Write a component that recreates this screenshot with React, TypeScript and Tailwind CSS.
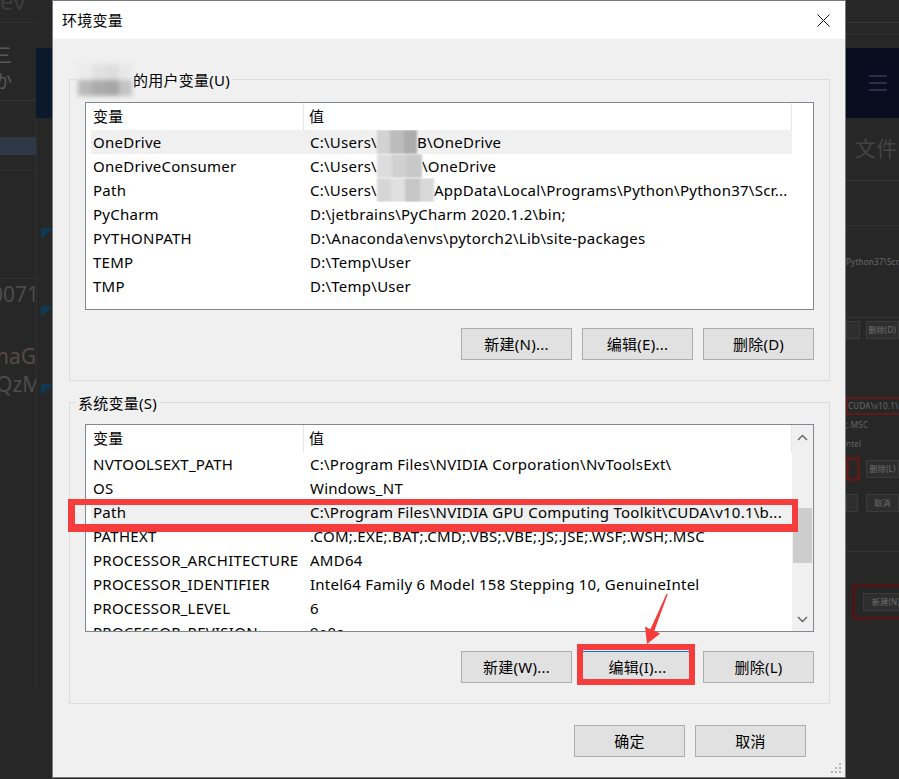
import React from 'react';

interface VarRow {
  name: string;
  value: React.ReactNode;
  selected?: boolean;
}

// pixelated privacy blur over the user name
const Mosaic: React.FC<{ width: string; blocks: string[] }> = ({ width, blocks }) => (
  <span className={`inline-flex h-[24px] shrink-0 blur-[1.2px] ${width}`}>
    {blocks.map((b, i) => (
      <span key={i} className={`flex-1 ${b}`} />
    ))}
  </span>
);

const userVars: VarRow[] = [
  {
    name: 'OneDrive',
    selected: true,
    value: (
      <>
        <span>C:\Users\</span>
        <Mosaic width="w-[40px]" blocks={['bg-[#d2d2d2]', 'bg-[#bcbcbc]', 'bg-[#acacac]']} />
        <span>B\OneDrive</span>
      </>
    ),
  },
  {
    name: 'OneDriveConsumer',
    value: (
      <>
        <span>C:\Users\</span>
        <Mosaic width="w-[45px]" blocks={['bg-[#dcdcdc]', 'bg-[#d0d0d0]', 'bg-[#c8c8c8]']} />
        <span>\OneDrive</span>
      </>
    ),
  },
  {
    name: 'Path',
    value: (
      <>
        <span>C:\Users\</span>
        <Mosaic width="w-[57px]" blocks={['bg-[#d6d6d6]', 'bg-[#e0e0e0]', 'bg-[#c6c6c6]', 'bg-[#d8d8d8]']} />
        <span>AppData\Local\Programs\Python\Python37\Scr...</span>
      </>
    ),
  },
  { name: 'PyCharm', value: 'D:\\jetbrains\\PyCharm 2020.1.2\\bin;' },
  { name: 'PYTHONPATH', value: 'D:\\Anaconda\\envs\\pytorch2\\Lib\\site-packages' },
  { name: 'TEMP', value: 'D:\\Temp\\User' },
  { name: 'TMP', value: 'D:\\Temp\\User' },
];

const systemVars: VarRow[] = [
  { name: 'NVTOOLSEXT_PATH', value: 'C:\\Program Files\\NVIDIA Corporation\\NvToolsExt\\' },
  { name: 'OS', value: 'Windows_NT' },
  { name: 'Path', value: 'C:\\Program Files\\NVIDIA GPU Computing Toolkit\\CUDA\\v10.1\\b...', selected: true },
  { name: 'PATHEXT', value: '.COM;.EXE;.BAT;.CMD;.VBS;.VBE;.JS;.JSE;.WSF;.WSH;.MSC' },
  { name: 'PROCESSOR_ARCHITECTURE', value: 'AMD64' },
  { name: 'PROCESSOR_IDENTIFIER', value: 'Intel64 Family 6 Model 158 Stepping 10, GenuineIntel' },
  { name: 'PROCESSOR_LEVEL', value: '6' },
  { name: 'PROCESSOR_REVISION', value: '9e0a' },
];

const Chevron: React.FC<{ up?: boolean }> = ({ up }) => (
  <svg width="11" height="7" viewBox="0 0 11 7">
    <path d={up ? 'M1 6 L5.5 1.5 L10 6' : 'M1 1 L5.5 5.5 L10 1'} fill="none" stroke="#606060" strokeWidth="1.4" />
  </svg>
);

const VarList: React.FC<{ rows: VarRow[]; scroll?: boolean }> = ({ rows, scroll }) => (
  <div className="flex h-[208px] overflow-hidden border border-[#828790] bg-white">
    <div className="flex min-w-0 flex-1 flex-col">
      <div className="flex h-[27px] shrink-0 border-r border-[#e5e5e5]">
        <div className="flex w-[218px] items-center border-r border-[#e5e5e5] pl-[7px]">变量</div>
        <div className="flex flex-1 items-center pl-[5px]">值</div>
      </div>
      {rows.map((row) => (
        <div key={row.name} className={`ml-[5px] flex h-[24px] shrink-0 items-center ${row.selected ? 'bg-[#f0f0f0]' : ''}`}>
          <div className="w-[219px] shrink-0 overflow-hidden whitespace-nowrap pl-[2px]">{row.name}</div>
          <div className="flex min-w-0 flex-1 items-center overflow-hidden whitespace-nowrap">{row.value}</div>
        </div>
      ))}
    </div>
    <div className={`flex w-[21px] shrink-0 flex-col ${scroll ? 'bg-[#f0f0f0]' : ''}`}>
      {scroll && (
        <>
          <div className="flex h-[24px] items-center justify-center">
            <Chevron up />
          </div>
          <div className="flex-1 px-[1px] pt-[59px]">
            <div className="h-[55px] bg-[#cdcdcd]" />
          </div>
          <div className="flex h-[24px] items-center justify-center">
            <Chevron />
          </div>
        </>
      )}
    </div>
  </div>
);

const WinButton: React.FC<{ label: string; focused?: boolean }> = ({ label, focused }) => (
  <button
    className={`flex h-[32px] w-[111px] items-center justify-center border bg-[#e1e1e1] text-black ${
      focused ? 'border-[#0078d7]' : 'border-[#adadad]'
    }`}
  >
    {label}
  </button>
);

const GroupBox: React.FC<{ label: React.ReactNode; pt: string; gap: string; children: React.ReactNode }> = ({ label, pt, gap, children }) => (
  <div className={`relative border border-[#dcdcdc] px-[15px] pb-[20px] ${pt}`}>
    <div className="absolute left-[6px] top-0 flex -translate-y-1/2 items-center bg-[#f0f0f0] px-[2px]">{label}</div>
    <div className={`flex flex-col ${gap}`}>{children}</div>
  </div>
);

const DimButton: React.FC<{ label?: string; w: string }> = ({ label, w }) => (
  <div className={`flex h-[18px] items-center justify-center border border-[#3a3a3a] bg-[#2e2e2e] text-[8px] text-[#707070] ${w}`}>
    {label}
  </div>
);

// the darkened desktop visible to the left of the dialog
const LeftStrip: React.FC = () => (
  <div className="flex h-full w-[52px] shrink-0">
    <div className="flex w-[36px] flex-col overflow-hidden text-[#5a5a5a]">
      <div className="h-[23px] shrink-0 overflow-hidden border-b border-[#323232]">
        <div className="-mt-[14px] whitespace-nowrap text-[24px] leading-[30px] text-[#3c3c3c]">ev 详</div>
      </div>
      <div className="h-[19px] shrink-0" />
      <div className="-ml-[8px] h-[28px] shrink-0 text-[20px] leading-[28px]">三</div>
      <div className="-ml-[6px] h-[31px] shrink-0 border-b border-[#333] text-[18px] leading-[22px]">か</div>
      <div className="h-[36px] shrink-0" />
      <div className="h-[18px] shrink-0 bg-[#2c3846]" />
      <div className="h-[16px] shrink-0 border-b border-[#303030]" />
      <div className="h-[108px] shrink-0 border-b border-[#303030]" />
      <div className="-ml-[9px] h-[30px] shrink-0 whitespace-nowrap text-[21px] leading-[30px] tracking-normal text-[#4c4c4c]">0071</div>
      <div className="h-[34px] shrink-0" />
      <div className="-ml-[4px] h-[27px] shrink-0 whitespace-nowrap text-[21px] leading-[27px] tracking-normal text-[#574a4a]">naG</div>
      <div className="-ml-[4px] h-[28px] shrink-0 whitespace-nowrap text-[21px] leading-[28px] tracking-normal text-[#4c4c4c]">QzM</div>
    </div>
    <div className="flex w-[16px] flex-col pt-[48px]">
      <div className="h-[70px] shrink-0 bg-[#0b1a2b]" />
      <div className="flex h-[570px] flex-col gap-[66px] border-l border-[#2f2f2f] pl-[4px] pt-[110px]">
        {[0, 1, 2].map((i) => (
          <svg key={i} width="12" height="12" viewBox="0 0 12 12">
            <polygon points="0,0 12,0 0,11" fill="#0f3a55" />
          </svg>
        ))}
      </div>
    </div>
  </div>
);

// the darkened copy of the dialog to the right
const RightStrip: React.FC = () => (
  <div className="flex h-full w-[53px] shrink-0 flex-col overflow-hidden text-[8px] text-[#666]">
    <div className="h-[23px] shrink-0 border-b border-[#363636]" />
    <div className="h-[12px] shrink-0 border-b border-[#303030]" />
    <div className="h-[13px] shrink-0" />
    <div className="flex h-[70px] shrink-0 flex-col items-center justify-center gap-[5px] bg-[#090d1f] pl-[10px]">
      <div className="h-[2px] w-[18px] bg-[#2b2f45]" />
      <div className="h-[2px] w-[18px] bg-[#2b2f45]" />
      <div className="h-[2px] w-[18px] bg-[#2b2f45]" />
    </div>
    <div className="flex h-[63px] shrink-0 items-center border-b border-[#363636] pl-[9px] text-[21px] text-[#444]">文件</div>
    <div className="h-[45px] shrink-0 border-b border-[#323232]" />
    <div className="h-[92px] shrink-0 whitespace-nowrap border-b border-[#363636] pt-[31px] leading-[10px] text-[#6a6a6a]">Python37\Scr...</div>
    <div className="mt-[3px] flex shrink-0 gap-[6px]">
      <DimButton w="w-[16px]" />
      <DimButton w="w-[40px]" label="删除(D)" />
    </div>
    <div className="mt-[58px] flex h-[18px] w-[60px] shrink-0 items-center whitespace-nowrap border-2 border-[#5c1c1c] text-[#6a6a6a]">CUDA\v10.1\b...</div>
    <div className="h-[19px] shrink-0 leading-[19px]">;.MSC</div>
    <div className="h-[20px] shrink-0 leading-[20px]">ntel</div>
    <div className="mt-[3px] flex shrink-0 items-center gap-[6px]">
      <div className="h-[24px] w-[16px] border-[3px] border-[#5a1a1a]" />
      <DimButton w="w-[40px]" label="删除(L)" />
    </div>
    <div className="mt-[13px] flex shrink-0 gap-[8px]">
      <DimButton w="w-[14px]" />
      <DimButton w="w-[40px]" label="取消" />
    </div>
    <div className="h-[40px] shrink-0 border-b border-[#333]" />
    <div className="ml-[6px] mt-[32px] flex h-[36px] w-[60px] shrink-0 items-center border-[3px] border-[#4e1515] pl-[8px]">
      <DimButton w="w-full" label="新建(N)" />
    </div>
  </div>
);

const App: React.FC = () => {
  return (
    <div className="relative flex h-[779px] w-[899px] overflow-hidden bg-[#272727] font-['Noto_Sans','Noto_Sans_CJK_SC',sans-serif] text-[15px] tracking-[0.25px] text-black">
      <LeftStrip />

      {/* dialog window */}
      <div className="relative flex h-[778px] w-[794px] shrink-0 flex-col border border-[#7a7a7a] bg-[#f0f0f0]">
        <div className="flex h-[38px] shrink-0 items-center justify-between bg-white pl-[9px]">
          <span>环境变量</span>
          <div className="flex h-full w-[44px] items-center justify-center">
            <svg width="13" height="13" viewBox="0 0 13 13">
              <path d="M0.5 0.5 L12.5 12.5 M12.5 0.5 L0.5 12.5" stroke="#111" strokeWidth="1" />
            </svg>
          </div>
        </div>

        <div className="flex flex-1 flex-col pl-[16px] pr-[15px] pt-[40px]">
          <GroupBox
            pt="pt-[22px]"
            gap="gap-[18px]"
            label={
              <>
                <span className="mr-[1px] grid h-[32px] w-[54px] grid-cols-4 grid-rows-2 blur-[2px]">
                  <span className="bg-[#ececec]" />
                  <span className="bg-[#e2e2e2]" />
                  <span className="bg-[#dedede]" />
                  <span className="bg-[#e8e8e8]" />
                  <span className="bg-[#b9b9b9]" />
                  <span className="bg-[#acacac]" />
                  <span className="bg-[#a7a7a7]" />
                  <span className="bg-[#c4c4c4]" />
                </span>
                <span>的用户变量(U)</span>
              </>
            }
          >
            <VarList rows={userVars} />
            <div className="flex justify-end gap-[10px]">
              <WinButton label="新建(N)..." />
              <WinButton label="编辑(E)..." />
              <WinButton label="删除(D)" />
            </div>
          </GroupBox>

          <div className="mt-[21px]">
            <GroupBox pt="pt-[21px]" gap="gap-[19px]" label={<span>系统变量(S)</span>}>
              <VarList rows={systemVars} scroll />
              <div className="flex justify-end gap-[10px]">
                <WinButton label="新建(W)..." />
                <WinButton label="编辑(I)..." focused />
                <WinButton label="删除(L)" />
              </div>
            </GroupBox>
          </div>

          <div className="mt-[21px] flex justify-end gap-[10px] pr-[24px]">
            <WinButton label="确定" />
            <WinButton label="取消" />
          </div>
        </div>

        {/* resize grip */}
        <svg className="absolute bottom-[3px] right-[3px]" width="11" height="11" viewBox="0 0 11 11">
          <rect x="8" y="0" width="2" height="2" fill="#b4b4b4" />
          <rect x="4" y="4" width="2" height="2" fill="#b4b4b4" />
          <rect x="8" y="4" width="2" height="2" fill="#b4b4b4" />
          <rect x="0" y="8" width="2" height="2" fill="#b4b4b4" />
          <rect x="4" y="8" width="2" height="2" fill="#b4b4b4" />
          <rect x="8" y="8" width="2" height="2" fill="#b4b4b4" />
        </svg>
      </div>

      <RightStrip />

      {/* red annotations drawn on top of the screenshot */}
      <div className="pointer-events-none absolute left-[68px] top-[499px] h-[33px] w-[730px] border-b-[8px] border-l-[7px] border-r-[6px] border-t-[6px] border-[#f53d3d]" />
      <div className="pointer-events-none absolute left-[577px] top-[644px] h-[41px] w-[118px] border-[6px] border-[#f53d3d]" />
      <svg className="pointer-events-none absolute left-0 top-0" width="899" height="779">
        <polygon points="667.8,594 654.4,630.8 660.2,633.4 647,644 645,626.6 650.4,629.2 666.4,594" fill="#f53d3d" />
      </svg>
    </div>
  );
};

export default App;
